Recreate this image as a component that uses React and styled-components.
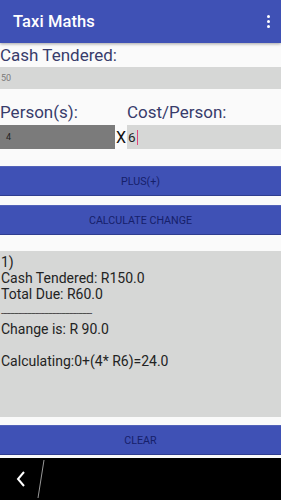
import React from "react";
import styled, { createGlobalStyle } from "styled-components";

const Global = createGlobalStyle`
  html, body { margin: 0; padding: 0; background: #fafafa; }
  body { font-family: Roboto, "Noto Sans", sans-serif; width: 281px; height: 500px; overflow: hidden; }
  #root { height: 500px; }
`;

const Page = styled.div`
  display: flex;
  flex-direction: column;
  height: 500px;
  background: #fafafa;
`;

const AppBar = styled.header`
  height: 43px;
  background: #3f51b5;
  display: flex;
  align-items: center;
  justify-content: space-between;
  padding: 0 13px;
  box-sizing: border-box;
  box-shadow: 0 1px 3px rgba(0,0,0,0.35);
  position: relative;
  z-index: 1;
`;

const Title = styled.h1`
  margin: 0;
  font-size: 16.5px;
  font-weight: 500;
  color: #fff;
  letter-spacing: 0.1px;
`;

const Dots = styled.div`
  display: flex;
  flex-direction: column;
  gap: 2px;
  margin-right: -2px;
  span { width: 3px; height: 3px; border-radius: 50%; background: #fff; display: block; }
`;

const Label = styled.div`
  font-size: 17px;
  line-height: ${p => p.$h || 24}px;
  height: ${p => p.$h || 24}px;
  color: #383c6b;
  white-space: nowrap;
`;

const Field = styled.div`
  height: ${p => p.$h}px;
  background: ${p => p.$bg || "#d6d7d6"};
  display: flex;
  align-items: center;
  box-sizing: border-box;
  padding-left: ${p => p.$pl || 1}px;
  font-size: ${p => p.$fs || 9}px;
  color: ${p => p.$color || "#7a7a7a"};
`;

const Row = styled.div`
  display: grid;
  grid-template-columns: 115px 12px 1fr;
  margin-top: ${p => p.$mt || 0}px;
`;

const Times = styled.div`
  font-size: 16px;
  color: #111;
  display: flex;
  align-items: center;
  justify-content: flex-start;
  padding-left: 1px;
`;

const Cursor = styled.span`
  display: inline-block;
  width: 1px;
  height: 15px;
  background: #e0457b;
  margin-left: 1px;
`;

const Button = styled.div`
  height: 30px;
  background: #3f51b5;
  margin-top: ${p => p.$mt}px;
  display: flex;
  align-items: center;
  justify-content: center;
  font-size: 10.7px;
  color: #16206a;
  border-top: 1px solid #5262b8;
  border-bottom: 1px solid #2f3d8f;
  box-sizing: border-box;
`;

const Result = styled.div`
  margin-top: 16px;
  height: 166px;
  background: #d6d7d6;
  box-sizing: border-box;
  padding: 3px 0 0 1px;
  font-size: 14px;
  line-height: 16.2px;
  color: #232323;
  white-space: pre;
`;

const Dashes = styled.span`
  font-size: 9px;
  letter-spacing: -0.6px;
`;

const NavBar = styled.nav`
  margin-top: 3px;
  flex: 1;
  background: #000;
  position: relative;
`;

const NavIcons = styled.svg`
  position: absolute;
  left: 0;
  top: 0;
`;

export default function App() {
  return (
    <>
      <Global />
      <Page>
        <AppBar>
          <Title>Taxi Maths</Title>
          <Dots><span /><span /><span /></Dots>
        </AppBar>
        <Label>Cash Tendered:</Label>
        <Field $h={22}>50</Field>
        <Row $mt={11}>
          <Label $h={25}>Person(s):</Label>
          <span />
          <Label $h={25}>Cost/Person:</Label>
        </Row>
        <Row>
          <Field $h={24} $bg="#7b7b7b" $pl={6} $color="#222">4</Field>
          <Times>X</Times>
          <Field $h={24} $fs={13.5} $color="#222">6<Cursor /></Field>
        </Row>
        <Button $mt={17}>PLUS(+)</Button>
        <Button $mt={9}>CALCULATE CHANGE</Button>
        <Result>{"1)\nCash Tendered: R150.0\nTotal Due: R60.0\n"}<Dashes>{"------------------------------------------------"}</Dashes>{"\nChange is: R 90.0\n\nCalculating:0+(4* R6)=24.0"}</Result>
        <Button $mt={8}>CLEAR</Button>
        <NavBar>
          <NavIcons width="281" height="42" viewBox="0 0 281 42">
            <polyline points="24,14 18,21 24,28" fill="none" stroke="#fff" strokeWidth="2" />
            <line x1="44" y1="2" x2="38" y2="40" stroke="#999" strokeWidth="1" />
          </NavIcons>
        </NavBar>
      </Page>
    </>
  );
}
